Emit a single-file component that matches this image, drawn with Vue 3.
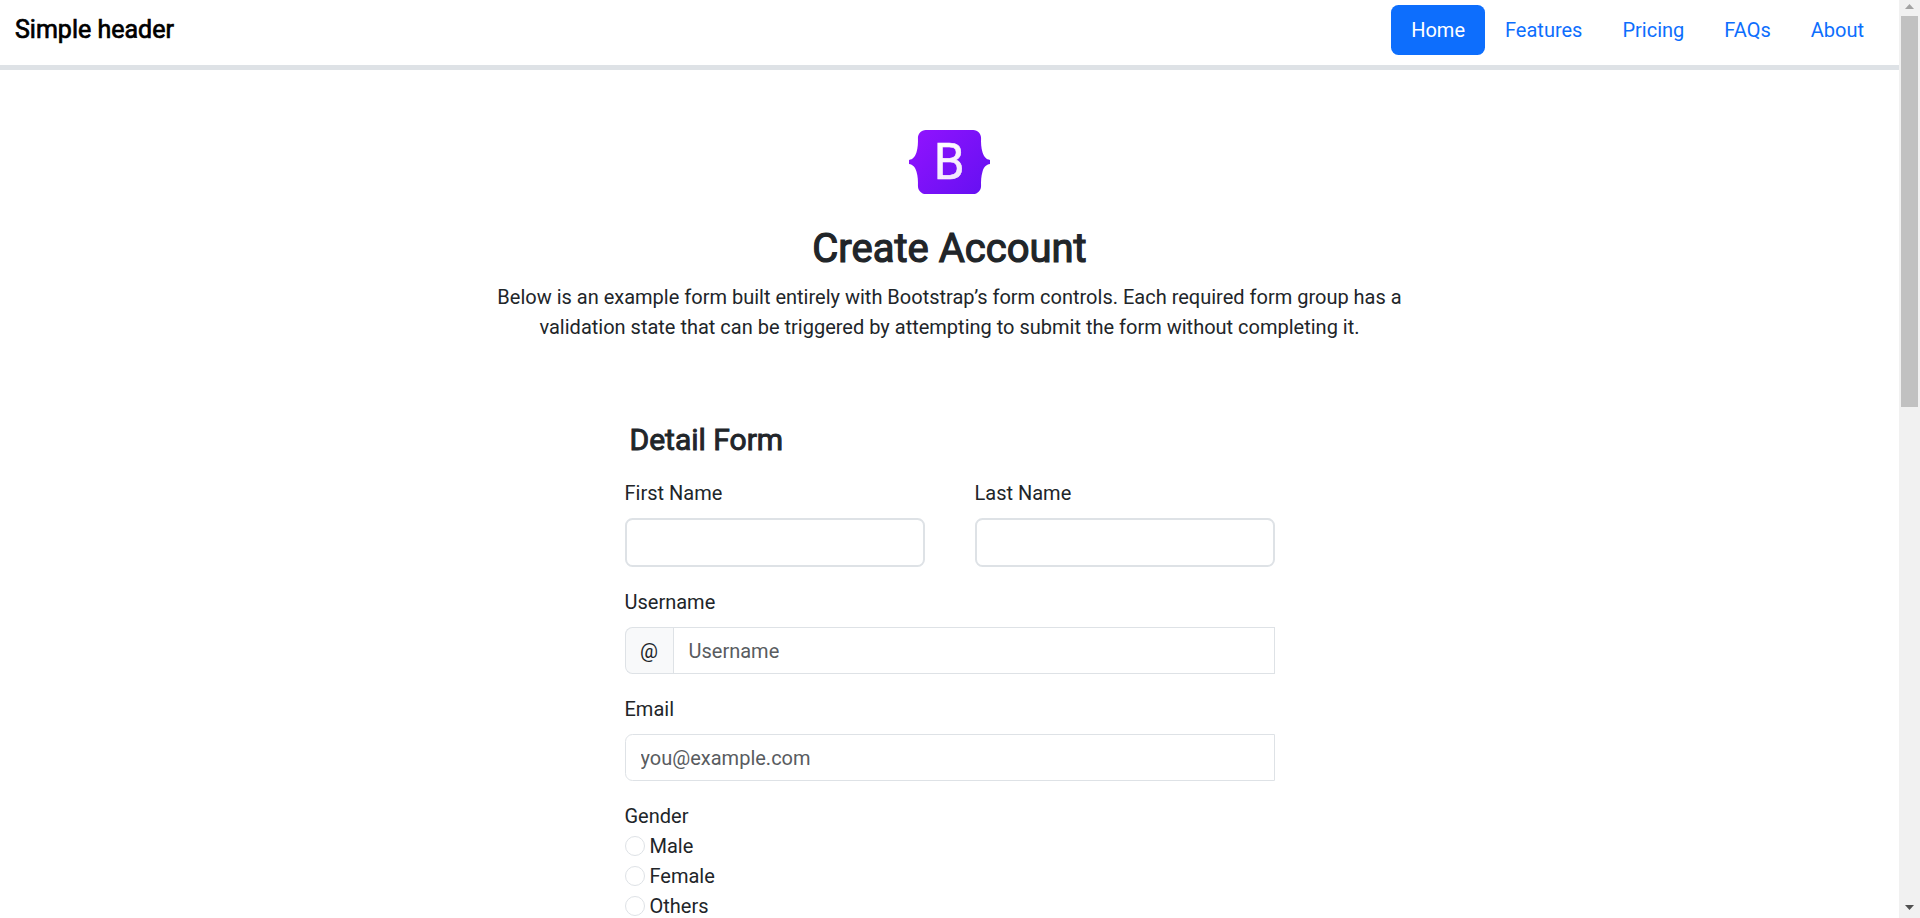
<script setup>
const links = ['Home', 'Features', 'Pricing', 'FAQs', 'About']
const genders = ['Male', 'Female', 'Others']
</script>

<template>
  <div class="screen">
    <div class="page">
      <header class="header">
        <a class="brand">Simple header</a>
        <nav class="nav">
          <a v-for="(link, i) in links" :key="link" class="link" :class="{ active: i === 0 }">{{ link }}</a>
        </nav>
      </header>

      <section class="intro">
        <svg class="logo" viewBox="0 0 118 94" preserveAspectRatio="none">
          <defs>
            <linearGradient id="body" x1="10" y1="0" x2="108" y2="94" gradientUnits="userSpaceOnUse">
              <stop offset="0" stop-color="#9013fe" />
              <stop offset="1" stop-color="#6610f2" />
            </linearGradient>
            <linearGradient id="letter" x1="45" y1="22" x2="70" y2="70" gradientUnits="userSpaceOnUse">
              <stop offset="0" stop-color="#ffffff" />
              <stop offset="1" stop-color="#f1e5fc" />
            </linearGradient>
          </defs>
          <path fill="url(#body)" d="M24.509 0c-6.733 0-11.715 5.893-11.492 12.284.214 6.14-.064 14.092-2.066 20.577C8.943 39.365 5.547 43.485 0 44.014v5.972c5.547.529 8.943 4.649 10.951 11.153 2.002 6.485 2.28 14.437 2.066 20.577C12.794 88.106 17.776 94 24.51 94H93.5c6.733 0 11.714-5.893 11.491-12.284-.214-6.14.064-14.092 2.066-20.577 2.009-6.504 5.396-10.624 10.943-11.153v-5.972c-5.547-.529-8.934-4.649-10.943-11.153-2.002-6.484-2.28-14.437-2.066-20.577C105.214 5.894 100.233 0 93.5 0H24.508z" />
          <text class="letter" x="58.500" y="72" text-anchor="middle" fill="url(#letter)">B</text>
        </svg>
        <h2 class="title">Create Account</h2>
        <p class="lead">
          Below is an example form built entirely with Bootstrap’s form controls. Each required form group has a
          validation state that can be triggered by attempting to submit the form without completing it.
        </p>
      </section>

      <form class="form">
        <h4 class="subtitle">Detail Form</h4>
        <div class="names">
          <div class="field">
            <label>First Name</label>
            <input class="control thick" type="text" />
          </div>
          <div class="field">
            <label>Last Name</label>
            <input class="control thick" type="text" />
          </div>
        </div>
        <div class="field">
          <label>Username</label>
          <div class="group">
            <span class="addon">@</span>
            <input class="control joined" type="text" placeholder="Username" />
          </div>
        </div>
        <div class="field">
          <label>Email</label>
          <input class="control left" type="email" placeholder="you@example.com" />
        </div>
        <div class="radios">
          <div>Gender</div>
          <label v-for="g in genders" :key="g" class="radio"><span class="dot"></span>{{ g }}</label>
        </div>
      </form>
    </div>

    <aside class="scrollbar">
      <svg class="arrow" viewBox="0 0 21 16"><path d="M6 9h9l-4.500-5z" fill="#a3a3a3" /></svg>
      <div class="thumb"></div>
      <svg class="arrow end" viewBox="0 0 21 16"><path d="M6 3h9l-4.500 5z" fill="#505050" /></svg>
    </aside>
  </div>
</template>

<style>
body { margin: 0; overflow: hidden; background: #fff; }
</style>

<style scoped>
* { box-sizing: border-box; }
.screen {
  display: flex;
  width: 1920px;
  height: 918px;
  overflow: hidden;
  font: 400 20px/30px Roboto, sans-serif;
  color: #212529;
}
.page { width: 1899px; height: 918px; overflow: hidden; }
.header {
  display: flex;
  justify-content: space-between;
  align-items: flex-start;
  height: 70px;
  padding: 5px 15px 10px;
  border-bottom: 5px solid #dee2e6;
}
.brand { font-size: 25px; line-height: 50px; color: #000; -webkit-text-stroke: 0.7px #000; }
.nav { display: flex; }
.link { padding: 10px 20px; color: #0d6efd; border-radius: 7.5px; }
.link.active { background: #0d6efd; color: #fff; }
.intro {
  display: flex;
  flex-direction: column;
  align-items: center;
  padding-top: 60px;
}
.logo { width: 81px; height: 64px; }
.letter { font: 400 72px Roboto, sans-serif; stroke: #faf4fe; stroke-width: 0.8px; }
.title {
  margin: 31px 0 9px;
  font-size: 40px;
  line-height: 48px;
  font-weight: 400;
  -webkit-text-stroke: 1.2px #212529;
}
.lead { width: 930px; margin: 0; text-align: center; }
.form { width: 650px; margin: 80px auto 0; }
.subtitle {
  margin: 0 0 20px 5px;
  font-size: 30px;
  line-height: 36px;
  font-weight: 400;
  -webkit-text-stroke: 0.95px #212529;
}
.names { display: grid; grid-template-columns: 1fr 1fr; gap: 50px; }
.field { display: flex; flex-direction: column; gap: 10px; margin-bottom: 20px; }
.names .field { min-width: 0; }
.control {
  width: 100%;
  height: 47px;
  padding: 0 15px;
  border: 1px solid #dee2e6;
  background: #fff;
  font: inherit;
  color: inherit;
  outline: none;
}
.control::placeholder { color: #595c5f; opacity: 1; }
.thick { height: 49px; border-width: 2px; border-radius: 7.5px; }
.left { border-radius: 7.5px 0 0 7.5px; }
.group { display: flex; height: 47px; }
.joined { flex: 1; min-width: 0; }
.addon {
  display: flex;
  align-items: center;
  justify-content: center;
  width: 48px;
  padding-top: 1px;
  border: 1px solid #dee2e6;
  border-right: 0;
  border-radius: 7.5px 0 0 7.5px;
  background: #f8f9fa;
}
.radios { display: flex; flex-direction: column; }
.radio { display: flex; align-items: center; gap: 5px; }
.dot { width: 20px; height: 20px; border: 1px solid #dee2e6; border-radius: 50%; }
.scrollbar { display: flex; flex-direction: column; align-items: center; width: 21px; height: 918px; background: #f1f1f1; }
.arrow { display: block; width: 21px; height: 16px; }
.end { margin-top: auto; }
.thumb { width: 17px; height: 391px; background: #c1c1c1; }
</style>
